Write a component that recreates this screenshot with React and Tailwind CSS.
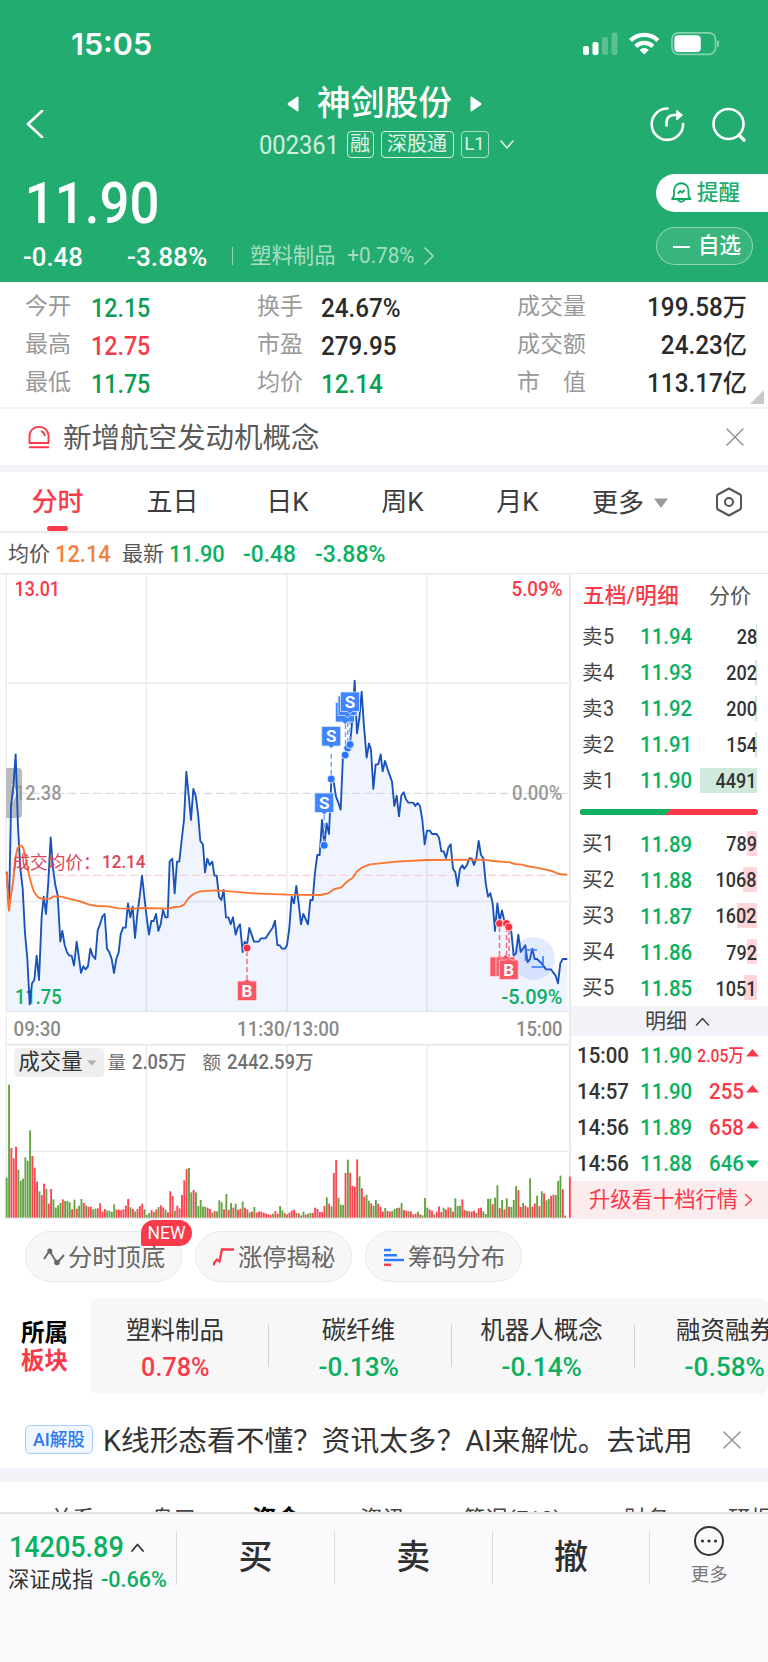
import React from "react";

const PRICE = [
  20,935,27,1050,33,740,40,680,47,583,54,800,61,925,68,985,75,1120,82,1195,89,1333,96,1270,103,1260,110,1187,117,1260,125,1070,131,1010,138,1062,145,965,152,832,159,925,166,975,173,1005,181,1145,187,1113,194,1155,201,1177,208,1187,215,1187,222,1217,230,1145,237,1195,243,1239,250,1219,257,1228,264,1219,271,1166,278,1187,286,1197,293,1112,300,1093,307,1070,314,1062,321,1166,328,1177,335,1197,342,1239,349,1197,356,1177,362,1123,369,1103,377,1103,384,1030,391,1072,398,1040,405,1134,412,1062,419,1010,426,947,433,1010,440,1072,447,1124,454,1083,461,1083,468,1062,475,1113,482,1093,489,1050,496,1072,503,1072,509,905,517,896,524,1000,531,905,538,905,545,840,552,780,559,635,566,705,573,780,580,687,587,707,594,760,601,843,609,854,615,937,622,896,629,915,637,905,643,947,650,947,657,1010,664,1020,671,990,678,1072,685,1072,692,1093,699,1072,707,1124,713,1103,720,1093,728,1176,734,1145,741,1155,748,1104,755,1124,762,1145,776,1145,783,1135,797,1135,811,1113,818,1103,825,1082,832,1155,839,1156,846,1166,855,1166,861,1156,868,1104,875,1010,882,1030,889,978,896,1030,903,1093,910,1062,924,1093,931,1020,938,1020,945,937,952,885,959,885,966,780,973,855,980,790,987,822,994,657,1001,665,1008,710,1015,728,1022,749,1029,585,1036,583,1043,565,1050,553,1057,480,1064,362,1071,520,1078,475,1085,395,1092,500,1100,593,1107,550,1113,570,1120,687,1127,613,1135,613,1142,583,1148,634,1155,603,1162,625,1176,665,1183,738,1190,707,1197,769,1204,707,1211,697,1218,718,1225,728,1240,728,1246,738,1253,729,1260,738,1267,780,1274,853,1281,812,1290,812,1296,822,1310,822,1317,833,1324,874,1331,874,1338,894,1345,863,1352,853,1359,926,1366,937,1373,978,1380,926,1387,916,1393,926,1401,915,1408,895,1415,895,1422,915,1429,895,1436,843,1443,885,1450,895,1457,968,1464,1010,1471,1000,1478,1030,1485,1113,1492,1030,1499,1083,1506,1051,1513,1083,1520,1090,1527,1100,1534,1115,1541,1187,1548,1180,1555,1124,1562,1176,1569,1166,1576,1156,1583,1207,1590,1197,1597,1166,1604,1197,1611,1197,1625,1210,1638,1228,1653,1228,1660,1238,1667,1247,1674,1270,1681,1210,1688,1197,1702,1197,
];

const AVG = [
  20,937,27,1052,34,1000,40,960,46,895,52,866,58,857,64,857,70,864,77,895,85,935,93,968,101,993,109,1006,118,1014,130,1017,150,1016,160,1009,185,1010,215,1018,240,1024,265,1033,290,1038,325,1039,355,1045,400,1046,430,1044,505,1046,525,1041,540,1040,552,1034,565,1015,580,1002,600,994,650,991,700,995,760,1000,860,1004,960,1005,985,1000,1003,987,1023,983,1040,966,1058,953,1070,935,1085,923,1110,913,1190,905,1280,900,1450,899,1480,903,1530,907,1545,912,1565,914,1580,918,1620,925,1650,932,1664,936,1675,942,1702,944,
];

const VOLUME =
  "120g 399g 209r 178r 213r 144g 111g 117g 181g 171g 262g 185r 150r 108r 79g 68r 102r 86g 42r 86r 55g 30g 37g 44g 55r 50g 50g 46g 25r 54g 27r 36g 56g 44r 37g 33r 33r 25g 27g 28r 43r 18r 26r 21g 21g 17g 40g 24r 24r 23r 25r 36r 56r 31g 26r 19g 26r 35r 42r 25g 8g 14g 23r 17g 25r 32g 37r 31r 24g 16r 79r 65r 21g 36r 28r 68r 112r 146r 149g 76g 83r 76g 35g 53g 33g 33g 30r 26r 15g 20r 19g 52g 46g 25r 71g 23r 44g 30r 42g 24r 27r 48g 30r 25r 16g 18r 32g 15r 19r 18r 15r 12r 10r 8r 12g 20r 12r 35g 22g 13r 10g 15r 21r 24r 14g 13r 7g 18g 9r 12g 14g 14r 30r 26r 17r 17r 35r 61g 42r 34g 134r 173r 60g 39g 38g 134r 174g 135r 96r 93r 175r 124g 88r 63r 69g 51g 43r 36g 53g 42r 32r 18r 29g 20r 18r 20g 26g 29g 30r 44g 23r 21r 19g 19r 10r 12r 18g 10r 7g 59g 30g 25r 21r 10g 18r 34r 17r 30g 24r 31r 30g 18r 58g 35g 36g 55r 23r 20g 19r 18r 21r 14g 28r 30r 19g 11g 57g 57g 40r 60g 97g 29r 53g 25r 58g 33r 32g 53g 95g 83r 32r 44g 36r 31r 118g 33r 43r 66g 35r 79g 73r 52g 56g 65r 69r 68g 110g 126g 85r 6r 0r 123r"
    .split(" ")
    .map((v) => ({ h: parseInt(v, 10), up: v.endsWith("r") }));

const pts = (a) => {
  const out = [];
  for (let i = 0; i < a.length; i += 2) out.push(`${a[i]},${a[i + 1]}`);
  return out.join(" ");
};

/* Text inside the chart, fitted to a given width */
const CT = ({ x, y, w, size = 21, fill, anchor = "start", weight = 400, children }) => (
  <text x={x} y={y} fontSize={size} fill={fill} fontWeight={weight} textAnchor={anchor} textLength={w} lengthAdjust="spacingAndGlyphs">
    {children}
  </text>
);

const Sell = ({ x, y, label = true }) => (
  <g>
    <path d={`M${x - 9.5} ${y}h19v19.500h-7l-2.500 2.500l-2.500 -2.500h-7z`} fill="#3f85ff" stroke="#dbe8ff" strokeWidth="0.8" />
    {label && <text x={x} y={y + 15.500} fontSize="17" fontWeight="700" fill="#fff" textAnchor="middle">S</text>}
  </g>
);

const Buy = ({ x, y, label = true }) => (
  <g>
    <path d={`M${x - 9.5} ${y}h7l2.500 -2.500l2.500 2.500h7v19.500h-19z`} fill="#f85866" stroke="#ffd9dc" strokeWidth="0.8" />
    {label && <text x={x} y={y + 16} fontSize="17" fontWeight="700" fill="#fff" textAnchor="middle">B</text>}
  </g>
);

const Dot = ({ x, y, c }) => <circle cx={x} cy={y} r="4" fill={c} stroke="#fff" strokeWidth="0.8" />;

function Chart() {
  return (
    <svg width="571" height="646" viewBox="0 573 571 646" className="block shrink-0">
      <g stroke="#e9eaec" strokeWidth="1.300" fill="none">
        <path d="M6.300 573V1218M146.500 573V1011.500M287 573V1011.500M427 573V1011.500M146.500 1045V1218M287 1045V1218M427 1045V1218" />
        <path d="M6 683H570M6 901.500H570M6 1011.500H570M6 1151.300H570M6 1218H570" />
        <path d="M0 573.500H571M6 1044.800H570M570 573V1218.500" strokeWidth="2" />
      </g>
      <g transform="translate(0 560) scale(.33333)">
        <polygon points={`20,1353 ${pts(PRICE)} 1702,1353`} fill="#3b74ff" fillOpacity="0.08" />
        <path d="M20 700H1702" stroke="#cbd5df" strokeWidth="3" strokeDasharray="25 12" />
        <path d="M20 946H1702" stroke="#f8cfd3" strokeWidth="4" strokeDasharray="25 12" />
      </g>
      <g>
        <path d="M6 768H18a4 4 0 0 1 4 4V814a4 4 0 0 1 -4 4H6z" fill="#b9bbbf" />
        <path d="M12 784l4 9l-4 9" stroke="#fff" strokeWidth="1.500" fill="none" />
      </g>
      <CT x={15} y={800} w={46.500} size={20} fill="#999" weight={500}>12.38</CT>
      <CT x={512} y={800} w={50.500} size={20} fill="#999" weight={500}>0.00%</CT>
      <CT x={15} y={1003.500} w={46.500} size={20} fill="#0bb060" weight={500}>11.75</CT>
      <CT x={501.500} y={1003.500} w={61} size={20} fill="#0bb060" weight={500}>-5.09%</CT>
      <g transform="translate(0 560) scale(.33333)" fill="none" strokeLinejoin="round">
        <polyline points={pts(PRICE)} stroke="#1a53b8" strokeWidth="5.600" />
        <polyline points={pts(AVG)} stroke="#fb7430" strokeWidth="5.600" />
      </g>
      <CT x={14.500} y={596} w={45.500} size={20} fill="#f93a4a" weight={500}>13.01</CT>
      <CT x={511.500} y={596} w={51} size={20} fill="#f93a4a" weight={500}>5.09%</CT>
      <CT x={12.500} y={868.500} w={88} size={18} fill="#dd4457">成交均价：</CT>
      <CT x={102} y={868.300} w={43.500} size={18} fill="#dd4457" weight={500}>12.14</CT>
      <circle cx="533.500" cy="958.500" r="21.500" fill="#3b74ff" fillOpacity="0.14" />
      <path d="M525.500 961V950H537M543 956V967H531.500" stroke="#2f7bff" strokeWidth="1.600" fill="none" />
      <g strokeWidth="1.400" strokeDasharray="5 3">
        <path d="M331.200 754V777M324.200 815V843M345.500 724V753M347.700 722V746M350 720V742" stroke="#6ba0ff" />
        <path d="M247 951V979M499.500 927V957M506.500 927V957M509 930V957" stroke="#f4626f" />
      </g>
      <Sell x={345} y={702.500} label={false} />
      <Sell x={347.500} y={696} label={false} />
      <Sell x={350} y={692} />
      <Sell x={331.200} y={726.500} />
      <Sell x={324.200} y={793} />
      <Dot x={324.200} y={845.300} c="#2477ff" />
      <Dot x={331.200} y={779} c="#2477ff" />
      <Dot x={345.200} y={755} c="#2477ff" />
      <Dot x={347.700} y={748} c="#2477ff" />
      <Dot x={350} y={744.500} c="#2477ff" />
      <Buy x={247} y={981} />
      <Buy x={499.500} y={957} label={false} />
      <Buy x={505.500} y={957} label={false} />
      <Buy x={508.800} y={960} />
      <Dot x={247} y={948} c="#fb2f40" />
      <Dot x={499.500} y={923.500} c="#fb2f40" />
      <Dot x={506.500} y={923.500} c="#fb2f40" />
      <Dot x={508.800} y={927} c="#fb2f40" />
      <CT x={13.500} y={1036} w={47.500} size={20} fill="#8a8a8a" weight={500}>09:30</CT>
      <CT x={237} y={1036} w={102.500} size={20} fill="#8a8a8a" weight={500}>11:30/13:00</CT>
      <CT x={516} y={1036} w={46.500} size={20} fill="#8a8a8a" weight={500}>15:00</CT>
      <rect x="14.500" y="1048" width="89.500" height="29" rx="4" fill="#efefef" />
      <CT x={18.500} y={1069} w={64} size={21.500} fill="#333">成交量</CT>
      <path d="M87 1060.500h9.500l-4.750 5z" fill="#b0b0b0" />
      <CT x={107.500} y={1069} w={18.500} size={18.500} fill="#707070">量</CT>
      <CT x={132} y={1069} w={54.500} size={19.500} fill="#707070" weight={500}>2.05万</CT>
      <CT x={202.500} y={1069} w={18.500} size={18.500} fill="#707070">额</CT>
      <CT x={227} y={1069} w={86.500} size={19.500} fill="#707070" weight={500}>2442.59万</CT>
      <g transform="translate(0 1000) scale(.33333)">
        {VOLUME.map((v, i) => (
          <rect key={i} x={17.3 + i * 7.01} y={653 - v.h} width="5.600" height={v.h} fill={v.up ? "#fb4552" : "#63a343"} />
        ))}
      </g>
    </svg>
  );
}

const Chevron = ({ w, h, d, sw = 2, c = "currentColor" }) => (
  <svg width={w} height={h} viewBox={`0 0 ${w} ${h}`} fill="none" stroke={c} strokeWidth={sw} className="block shrink-0" strokeLinecap="round" strokeLinejoin="round">
    <path d={d} />
  </svg>
);

const Close = () => <Chevron w={18} h={18} d="M1 1L17 17M17 1L1 17" sw={1.4} c="#8d8d8d" />;

const SELLS = [
  ["卖5", "11.94", "28", "w-[1px]"],
  ["卖4", "11.93", "202", "w-[2px]"],
  ["卖3", "11.92", "200", "w-[2px]"],
  ["卖2", "11.91", "154", "w-[2px]"],
  ["卖1", "11.90", "4491", "w-[57px]"],
];
const BUYS = [
  ["买1", "11.89", "789", "w-[10px]"],
  ["买2", "11.88", "1068", "w-[14px]"],
  ["买3", "11.87", "1602", "w-[20px]"],
  ["买4", "11.86", "792", "w-[10px]"],
  ["买5", "11.85", "1051", "w-[13px]"],
];

const BookRow = ({ row, bar }) => (
  <div className="flex h-[36.1px] items-center pl-[11px]">
    <span className="w-[58px] pt-px text-[20.500px] text-[#444]">
      {row[0][0]}
      <span className="inline-block origin-left scale-x-90 text-[22px]">{row[0][1]}</span>
    </span>
    <span className="w-[60px] origin-left scale-x-[0.93] pt-0.5 text-[22px] font-medium text-[#0bb060]">{row[1]}</span>
    <span className="relative flex h-[25px] w-[57px] items-center justify-end">
      <span className={`absolute right-0 top-0 h-[25px] ${row[3]} ${bar}`} />
      <span className="relative origin-right scale-x-[0.88] pt-0.5 text-[20.500px] font-medium text-[#333]">{row[2]}</span>
    </span>
  </div>
);

const TICKS = [
  ["15:00", "11.90", "2.05万", true],
  ["14:57", "11.90", "255", true],
  ["14:56", "11.89", "658", true],
  ["14:56", "11.88", "646", false],
];

function OrderBook() {
  return (
    <div className="flex w-[197px] flex-col border-t border-[#e4e4e4] leading-none">
      <div className="flex h-[44px] items-center pl-3">
        <span className="w-[126px] text-[21.800px] font-medium text-[#f93a4a]">五档/明细</span>
        <span className="text-[21px] text-[#555]">分价</span>
      </div>
      {SELLS.map((r) => <BookRow key={r[0]} row={r} bar="bg-[#cfeadc]" />)}
      <div className="flex h-[27px] items-center pl-[9px]">
        <svg width="178" height="6" viewBox="0 0 178 6">
          <rect width="178" height="6" rx="3" fill="#f93a4a" />
          <path d="M3 0H91L85 6H3A3 3 0 0 1 3 0z" fill="#0bb060" />
        </svg>
      </div>
      {BUYS.map((r) => <BookRow key={r[0]} row={r} bar="bg-[#fed5d9]" />)}
      <div className="flex h-[30px] items-center bg-[#f2f3f9] pl-[74px] pt-0.5 text-[21px] text-[#444]">
        明细
        <span className="pl-2"><Chevron w={15} h={9} d="M1.5 8L7.5 1.5L13.5 8" sw={1.6} /></span>
      </div>
      {TICKS.map((t, i) => (
        <div key={i} className="flex h-[36.200px] items-center pl-[6px] pt-[3px]">
          <span className="w-[63px] origin-left scale-x-[0.93] text-[22px] font-medium text-[#333]">{t[0]}</span>
          <span className="w-[59px] origin-left scale-x-[0.93] text-[22px] font-medium text-[#0bb060]">{t[1]}</span>
          <span className={`mr-[2px] flex w-[45px] origin-right justify-end whitespace-nowrap font-medium ${i === 0 ? "scale-x-[0.87] text-[18px]" : "scale-x-[0.93] text-[22px]"} ${t[3] ? "text-[#f93a4a]" : "text-[#0bb060]"}`}>{t[2]}</span>
          <svg width="13" height="8" viewBox="0 0 13 8" className={t[3] ? "mb-1.5" : ""}>
            {t[3] ? <path d="M0 7.500L6.500 0L13 7.500z" fill="#f93a4a" /> : <path d="M0 .5L6.500 8L13 .5z" fill="#0bb060" />}
          </svg>
        </div>
      ))}
      <div className="flex grow items-center bg-[#fdecee] pl-[18px] text-[21.300px] text-[#f93a4a]">
        升级看十档行情
        <span className="pl-1.5"><Chevron w={9} h={14} d="M1.500 1.500L7.500 7L1.500 12.500" sw={1.400} /></span>
      </div>
    </div>
  );
}

const TABS = [
  ["分时", "w-[115px]"],
  ["五日", "w-[115px]"],
  ["日K", "w-[115px]"],
  ["周K", "w-[115px]"],
  ["月K", "w-[115px]"],
];

const SECTORS = [
  ["塑料制品", "0.78%", "text-[#f93a4a]"],
  ["碳纤维", "-0.13%", "text-[#0bb060]"],
  ["机器人概念", "-0.14%", "text-[#0bb060]"],
  ["融资融券", "-0.58%", "text-[#0bb060]"],
];

const STATS = [
  ["今开", "12.15", "text-[#0a9e55]", "换手", "24.67%", "text-[#2b2b2b]", "成交量", "199.58万"],
  ["最高", "12.75", "text-[#f93a4a]", "市盈", "279.95", "text-[#2b2b2b]", "成交额", "24.23亿"],
  ["最低", "11.75", "text-[#0a9e55]", "均价", "12.14", "text-[#0a9e55]", "市　值", "113.17亿"],
];

const Chip = ({ icon, children, badge }) => (
  <div className="relative flex h-[51px] w-[157px] items-center gap-[3px] rounded-full border border-[#e9e9e9] bg-[#f7f7f7] pl-[17px] text-[24.300px] text-[#666]">
    {icon}
    <span className="whitespace-nowrap pt-[3px]">{children}</span>
    {badge && (
      <span className="absolute -right-[11px] -top-[12px] flex h-[26px] w-[51px] items-center justify-center rounded-[13px] rounded-bl-[2px] bg-[#f93a4a] pt-0.5 text-[17.500px] text-white">{badge}</span>
    )}
  </div>
);

function Header() {
  return (
    <div className="flex h-[282px] shrink-0 flex-col bg-[#22ac6f] text-white">
      <div className="flex h-[86px] items-center justify-between pl-[71px] pr-[49px] pt-[2px]">
        <span className="font-['Inter'] text-[30.500px] font-semibold">15:05</span>
        <svg width="137" height="26" viewBox="581 31 137 26" fill="#fff">
          <rect x="582" y="46" width="6" height="9" rx="2" />
          <rect x="591.500" y="42" width="6" height="13" rx="2" />
          <rect x="601" y="37" width="6" height="18" rx="2" opacity=".25" />
          <rect x="610.500" y="32.500" width="6" height="22.500" rx="2" opacity=".25" />
          <g fill="none" stroke="#fff" strokeWidth="4.200">
            <path d="M629.600 40.500a19.500 19.500 0 0 1 27.300 0" />
            <path d="M634.800 46.400a12 12 0 0 1 17 0" />
          </g>
          <path d="M638.600 49.900a6.800 6.800 0 0 1 9.300 0l-4.650 4.700z" />
          <rect x="671" y="32.800" width="43.500" height="21.500" rx="6.500" fill="none" stroke="#fff" strokeOpacity=".45" strokeWidth="1.700" />
          <rect x="673.300" y="35.200" width="26.500" height="16.700" rx="4" />
          <path d="M716.300 39.800q2.600 1.500 2.600 3.900t-2.600 3.900z" opacity=".5" />
        </svg>
      </div>
      <div className="flex h-[76px] items-start justify-between pl-[26px] pr-[22px]">
        <div className="w-[110px] pt-[24px]">
          <Chevron w={18} h={28} d="M16 1L2 14L16 27" sw={2.6} />
        </div>
        <div className="mr-[14px] flex flex-col items-center leading-none">
          <div className="flex h-[33px] items-center gap-[18px] pr-[3px] pt-[2px]">
            <svg width="12" height="16" viewBox="0 0 12 16"><path d="M10.500 .5q1 0 1 1V14.500q0 1 -1 1L1 9q-1 -1 0 -2z" fill="#fff" /></svg>
            <span className="text-[33.700px] font-medium">神剑股份</span>
            <svg width="12" height="16" viewBox="0 0 12 16"><path d="M1.500 .5q-1 0 -1 1V14.500q0 1 1 1L11 9q1 -1 0 -2z" fill="#fff" /></svg>
          </div>
          <div className="flex h-[50px] items-center text-white/85">
            <span className="w-[79px] origin-left scale-x-[0.93] pt-1 text-[25.500px] text-white/80">002361</span>
            <span className="ml-[9px] flex h-[27px] w-[27px] items-center justify-center rounded-[4px] border border-white/80 text-[20px]">融</span>
            <span className="ml-[7px] flex h-[27px] w-[73px] items-center justify-center rounded-[4px] border border-white/80 text-[20px]">深股通</span>
            <span className="ml-[7px] flex h-[27px] w-[28px] items-center justify-center rounded-[4px] border border-white/60 pt-px text-[18.500px]">L1</span>
            <span className="pl-[11px]"><Chevron w={14} h={9} d="M1 1L7 8L13 1" sw={1.6} /></span>
          </div>
        </div>
        <div className="flex w-[96px] shrink-0 pt-[20px]">
          <svg width="96" height="38" viewBox="650 106 96 38" fill="none" stroke="#fff" strokeWidth="2.600" strokeLinecap="round">
            <path d="M667.500 108.500a15.700 15.700 0 1 0 15.600 15.500" />
            <path d="M666.500 125.500v-2.500q0 -8 8 -8h6.500" />
            <path d="M677 110.500l5.500 4.700l-5.500 4.500z" fill="#fff" strokeWidth="1" strokeLinejoin="round" />
            <circle cx="728.500" cy="124" r="15" />
            <path d="M739 135l5 5" strokeWidth="3.200" />
          </svg>
        </div>
      </div>
      <div className="flex grow">
        <div className="flex grow flex-col pl-[23px]">
          <div className="h-[76px] origin-left scale-x-[0.91] pl-[2px] text-[58px] font-medium leading-[83px]">11.90</div>
          <div className="flex h-[36px] items-center leading-none">
            <span className="w-[104px] origin-left scale-x-[0.99] pt-px text-[26px] font-medium">-0.48</span>
            <span className="w-[105px] origin-left scale-x-[1.01] pt-px text-[26px] font-medium">-3.88%</span>
            <span className="h-[18px] w-px bg-white/50" />
            <span className="pl-[17px] text-[21.400px] text-white/60">塑料制品</span>
            <span className="w-[88px] origin-left scale-x-[0.94] pl-[12px] text-[22px] text-white/60">+0.78%</span>
            <span className="text-white/60"><Chevron w={10} h={18} d="M1 1L9 9L1 17" sw={1.6} /></span>
          </div>
        </div>
        <div className="flex w-[112px] flex-col gap-[15px] pt-[12px]">
          <div className="flex h-[38px] items-center rounded-l-full bg-white pl-[15px] text-[21.500px] font-medium text-[#22ac6f]">
            <svg width="21" height="22" viewBox="0 0 21 22" fill="none" stroke="#14a862" strokeWidth="1.800" strokeLinejoin="round">
              <path d="M1 17h18.500l-2 -3V8.500a7.200 7.200 0 0 0 -14.500 0V14z" />
              <path d="M6.500 17.500q3.700 4.500 7.500 0M6.800 11.500l2.500 -2.500l1.700 1.700l2.700 -2.700" />
            </svg>
            <span className="pl-[5px] pt-px">提醒</span>
          </div>
          <div className="flex h-[38px] w-[97px] items-center rounded-full border border-white/45 bg-white/10 pl-[16px] pt-px text-[21.500px] font-medium">
            <span className="mr-[8px] h-[2px] w-[17px] bg-white" />自选
          </div>
        </div>
      </div>
    </div>
  );
}

export default function App() {
  return (
    <div className="flex h-[1662px] w-[768px] flex-col overflow-hidden bg-white font-['Roboto','Noto_Sans_CJK_SC',sans-serif]">
      <Header />

      <div className="relative flex h-[127px] shrink-0 flex-col border-b-2 border-[#f1f1f1] pt-[6px] leading-none">
        {STATS.map((s) => (
          <div key={s[0]} className="flex h-[37.800px] items-center pl-[25px] pr-[21px] text-[23px] text-[#999]">
            <span className="w-[66px]">{s[0]}</span>
            <span className={`w-[166px] origin-left scale-x-[0.93] pt-1 text-[25px] font-medium ${s[2]}`}>{s[1]}</span>
            <span className="w-[64px]">{s[3]}</span>
            <span className={`w-[196px] origin-left scale-x-[0.97] pt-1 text-[25px] font-medium ${s[5]}`}>{s[4]}</span>
            <span className="w-[90px]">{s[6]}</span>
            <span className="grow origin-right scale-x-[0.97] whitespace-nowrap pt-0.5 text-right text-[25px] font-medium text-[#2b2b2b]">{s[7]}</span>
          </div>
        ))}
        <svg width="14" height="14" viewBox="0 0 14 14" className="absolute bottom-[3px] right-[4px]"><path d="M14 0V14H0z" fill="#c9c9c9" /></svg>
      </div>

      <div className="flex h-[56px] shrink-0 items-center pl-[28px] pr-[24px]">
        <svg width="22" height="23" viewBox="0 0 22 23" fill="none" stroke="#f93a4a" strokeWidth="1.900">
          <path d="M1.500 17V9.500a9.500 8.600 0 0 1 19 0V17z" />
          <path d="M1 21.300H21M13 5.200q3.500 1.200 4 4.800" />
        </svg>
        <span className="grow pl-[13px] pt-[4px] text-[28.500px] leading-none text-[#5a5a5a]">新增航空发动机概念</span>
        <Close />
      </div>
      <div className="h-[7px] shrink-0 bg-[#f2f3f9]" />

      <div className="flex h-[61px] shrink-0 items-center border-b-2 border-[#eaeaea] text-[26px] leading-none text-[#3c3c3c]">
        {TABS.map(([t, w], i) => (
          <div key={t} className={`flex h-full flex-col items-center justify-between ${w} ${i === 0 ? "font-medium text-[#f93a4a]" : ""}`}>
            <span className="pt-[17px]">{t}</span>
            {i === 0 && <span className="h-[5px] w-[21px] rounded-[3px] bg-[#f93a4a]" />}
          </div>
        ))}
        <div className="flex w-[138px] items-center pl-[17px] pt-[2px]">
          <span>更多</span>
          <svg width="14" height="10" viewBox="0 0 14 10" className="ml-[10px]"><path d="M0 .5H14L7 10z" fill="#9a9a9a" /></svg>
        </div>
        <svg width="28" height="30" viewBox="0 0 28 30" fill="none" stroke="#555" strokeWidth="2" strokeLinejoin="round" className="ml-[2px]">
          <path d="M14 1.500L25 7.500Q26 8 26 9.300V20.700Q26 22 25 22.500L14 28.500L3 22.500Q2 22 2 20.700V9.300Q2 8 3 7.500z" />
          <circle cx="14" cy="15" r="4" />
        </svg>
      </div>

      <div className="flex h-[40px] shrink-0 items-center pl-[8px] pt-[2px] text-[21px] leading-none text-[#555]">
        <span className="w-[47px]">均价</span>
        <span className="w-[67px] origin-left scale-x-[0.93] pt-0.5 text-[23.500px] font-medium text-[#f5803c]">12.14</span>
        <span className="w-[47px]">最新</span>
        <span className="w-[74px] origin-left scale-x-[0.93] pt-0.5 text-[23.500px] font-medium text-[#0bb060]">11.90</span>
        <span className="w-[72px] origin-left scale-x-[0.97] pt-0.5 text-[23.500px] font-medium text-[#0bb060]">-0.48</span>
        <span className="origin-left scale-x-[0.98] pt-0.5 text-[23.500px] font-medium text-[#0bb060]">-3.88%</span>
      </div>

      <div className="flex h-[646px] shrink-0">
        <Chart />
        <OrderBook />
      </div>

      <div className="flex h-[79px] shrink-0 gap-[13px] pl-[25px] pt-[12px] leading-none">
        <Chip badge="NEW" icon={
          <svg width="22" height="20" viewBox="0 0 22 20" fill="none" stroke="#666" strokeWidth="1.900">
            <path d="M1 12L6.500 4L14 16L21 8" /><circle cx="6.800" cy="4" r="2.500" fill="#666" stroke="none" /><circle cx="14" cy="15.500" r="2.800" fill="#666" stroke="none" />
          </svg>}>分时顶底</Chip>
        <Chip icon={
          <svg width="22" height="20" viewBox="0 0 22 20" fill="none" stroke="#f93a4a" strokeWidth="2.300">
            <path d="M1 18.500V16L4 12.500L6.500 14.500L9 2.500H21" />
          </svg>}>涨停揭秘</Chip>
        <Chip icon={
          <svg width="22" height="20" viewBox="0 0 22 20" fill="none" strokeWidth="2.500">
            <path d="M1 3H8M1 8.300H14M1 13.100H21" stroke="#2f7bff" /><path d="M1 17.800H8" stroke="#f93a4a" />
          </svg>}>筹码分布</Chip>
      </div>

      <div className="flex h-[96px] shrink-0 leading-none">
        <div className="flex w-[90px] flex-col justify-center gap-[5px] pl-[21px] pt-[3px] text-[23.500px] font-bold text-black">
          <span>所属</span>
          <span className="text-[#f93a4a]">板块</span>
        </div>
        <div className="flex w-[678px] overflow-hidden rounded-[8px] bg-[#f7f7f8]">
          {SECTORS.map(([n, p, c], i) => (
            <div key={n} className={`flex shrink-0 items-center ${i === 0 ? "w-[179px]" : "w-[183px]"}`}>
              <div className={`flex grow flex-col items-center gap-[10px] whitespace-nowrap pt-[7px] ${i === 0 ? "pr-2" : "pr-[3px]"}`}>
                <span className="text-[24.500px] text-[#333]">{n}</span>
                <span className={`text-[26px] font-medium ${c}`}><span className={`inline-block ${i === 0 ? "scale-x-[0.97]" : "scale-x-[1.01]"}`}>{p}</span></span>
              </div>
              {i < 3 && <span className="h-[42px] w-px bg-[#d0d0d0]" />}
            </div>
          ))}
        </div>
      </div>

      <div className="flex h-[74px] shrink-0 items-center pl-[25px] pr-[27px] pt-[17px] leading-none">
        <span className="flex h-[29px] w-[68px] items-center justify-center rounded-[5px] border border-[#a9ccfb] bg-[#f1f7ff] pt-0.5 text-[17.700px] font-medium text-[#2b78f6]">AI解股</span>
        <span className="grow whitespace-nowrap pl-[10px] pt-[4px] text-[28.700px] text-[#333]">K线形态看不懂？资讯太多？AI来解忧。去试用</span>
        <Close />
      </div>
      <div className="h-[14px] shrink-0 bg-[#f2f3f9]" />
      <div className="flex h-[30px] shrink-0 overflow-hidden whitespace-nowrap pl-[50px] pt-[26px] text-[22.500px] leading-none text-[#444]">
        <span className="w-[101px] shrink-0">关系</span>
        <span className="w-[101px] shrink-0">盘口</span>
        <span className="w-[108px] shrink-0 text-[24.500px] font-bold text-black">资金</span>
        <span className="w-[103px] shrink-0">资讯</span>
        <span className="w-[161px] shrink-0">简况(F10)</span>
        <span className="w-[104px] shrink-0">财务</span>
        <span className="w-[50px] shrink-0">研报</span>
      </div>

      <div className="flex grow items-start border-t-2 border-[#e2e2e4] bg-[#fafafc] leading-none">
        <div className="flex w-[176px] flex-col pl-[8px] pt-[18px]">
          <div className="flex h-[30px] items-center">
            <span className="w-[123px] origin-left scale-x-[0.93] pl-[1px] text-[29px] font-medium text-[#0bb060]">14205.89</span>
            <Chevron w={13} h={9} d="M1 8L6.500 1.500L12 8" sw={1.800} c="#333" />
          </div>
          <div className="flex h-[30px] items-center pt-1.5">
            <span className="w-[93px] text-[21.300px] text-[#333]">深证成指</span>
            <span className="origin-left scale-x-[0.98] text-[22px] font-medium text-[#0bb060]">-0.66%</span>
          </div>
        </div>
        {["买", "卖", "撤"].map((t) => (
          <div key={t} className="flex w-[157.800px] pt-[17px]">
            <span className="h-[53px] w-px bg-[#dadadc]" />
            <span className="grow pt-[9px] text-center text-[34px] font-medium text-[#2f2f2f]">{t}</span>
          </div>
        ))}
        <div className="flex grow pt-[17px]">
          <span className="h-[53px] w-px bg-[#dadadc]" />
          <div className="-mt-[6px] flex grow flex-col items-center gap-[9px] text-[18.500px] text-[#7a7a7a]">
            <svg width="32" height="32" viewBox="0 0 32 32" fill="none" stroke="#333" strokeWidth="2">
              <circle cx="16" cy="16" r="14" />
              <g fill="#333" stroke="none"><circle cx="9.500" cy="16" r="1.600" /><circle cx="16" cy="16" r="1.600" /><circle cx="22.500" cy="16" r="1.600" /></g>
            </svg>
            更多
          </div>
        </div>
      </div>
    </div>
  );
}
